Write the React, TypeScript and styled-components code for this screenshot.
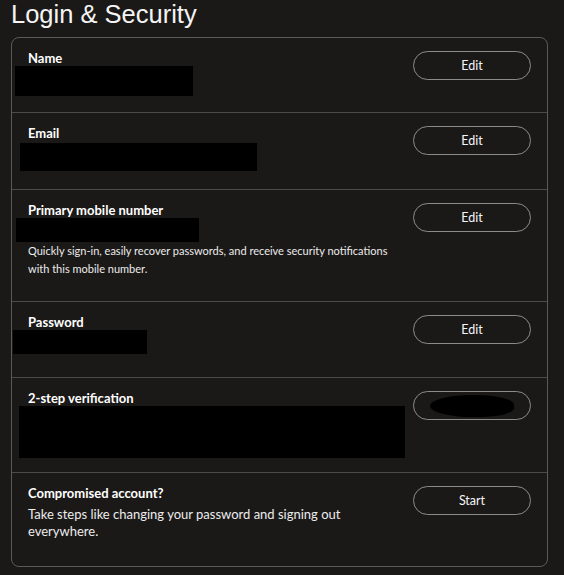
import styled, { createGlobalStyle } from "styled-components"

const GlobalStyle = createGlobalStyle`
  html, body {
    margin: 0;
    padding: 0;
    background-color: #1b1918;
  }
  body {
    font-family: Lato, "Liberation Sans", sans-serif;
    color: #f2f2f2;
  }
  * {
    box-sizing: border-box;
  }
`

interface Field {
  label: string
  height: number
  action: string
  hidden?: { w: number, h: number, x: number, y?: number }
  note?: string
  noteSize?: number
  blankAction?: boolean
}

const fields: Field[] = [
  { label: 'Name', height: 75, action: 'Edit', hidden: { w: 178, h: 30, x: -13 } },
  { label: 'Email', height: 77, action: 'Edit', hidden: { w: 237, h: 28, x: -8, y: 2 } },
  {
    label: 'Primary mobile number',
    height: 112,
    action: 'Edit',
    hidden: { w: 183, h: 24, x: -12 },
    note: 'Quickly sign-in, easily recover passwords, and receive security notifications with this mobile number.',
    noteSize: 11
  },
  { label: 'Password', height: 76, action: 'Edit', hidden: { w: 134, h: 24, x: -15 } },
  { label: '2-step verification', height: 95, action: '', hidden: { w: 386, h: 52, x: -9 }, blankAction: true },
  {
    label: 'Compromised account?',
    height: 93,
    action: 'Start',
    note: 'Take steps like changing your password and signing out everywhere.',
    noteSize: 13
  }
]

function App () {
  return <Page>
    <GlobalStyle />
    <Title>Login &amp; Security</Title>
    <Card>
      {fields.map((f, i) => (
        <Row key={f.label} $height={f.height} $last={i === fields.length - 1}>
          <Info>
            <Label>{f.label}</Label>
            {f.hidden && (
              <Redacted $w={f.hidden.w} $h={f.hidden.h} $x={f.hidden.x} $y={f.hidden.y ?? 0} />
            )}
            {f.note && <Note $size={f.noteSize ?? 13}>{f.note}</Note>}
          </Info>
          <PillButton>
            {f.blankAction ? <Blot /> : f.action}
          </PillButton>
        </Row>
      ))}
    </Card>
  </Page>
}

const Page = styled.div`
  width: 564px;
  min-height: 575px;
  padding: 0 16px 0 11px;
`

const Title = styled.h1`
  margin: 0;
  height: 37px;
  font-family: "Liberation Sans", Arial, sans-serif;
  font-size: 25.5px;
  line-height: 29px;
  font-weight: 400;
  color: #f4f4f4;
`

const Card = styled.div`
  border: 1px solid #5c5a58;
  border-radius: 8px;
  display: flex;
  flex-direction: column;
`

const Row = styled.div<{ $height: number, $last: boolean }>`
  height: ${p => p.$height}px;
  display: flex;
  justify-content: space-between;
  align-items: flex-start;
  padding: 12px 16px 0 16px;
  border-bottom: ${p => p.$last ? 'none' : '1px solid #4c4a48'};
`

const Info = styled.div`
  display: flex;
  flex-direction: column;
  max-width: 372px;
`

const Label = styled.div`
  font-size: 13px;
  line-height: 16px;
  font-weight: 700;
  color: #ffffff;
`

const Redacted = styled.div<{ $w: number, $h: number, $x: number, $y: number }>`
  width: ${p => p.$w}px;
  height: ${p => p.$h}px;
  margin-left: ${p => p.$x}px;
  margin-top: ${p => p.$y}px;
  background-color: #000;
`

const Note = styled.p<{ $size: number }>`
  margin: ${p => p.$size === 11 ? 0 : 5}px 0 0 0;
  font-size: ${p => p.$size}px;
  line-height: ${p => p.$size === 11 ? 18 : 17}px;
  color: #ececec;
`

const PillButton = styled.button`
  margin-top: 1px;
  width: 118px;
  height: 29px;
  border: 1px solid #8e8c8a;
  border-radius: 15px;
  background: transparent;
  color: #f6f6f6;
  font-family: inherit;
  font-size: 12.5px;
  display: flex;
  align-items: center;
  justify-content: center;
  cursor: pointer;
`

const Blot = styled.span`
  width: 84px;
  height: 22px;
  background-color: #000;
  border-radius: 50% 45% 40% 50%;
`

export default App
